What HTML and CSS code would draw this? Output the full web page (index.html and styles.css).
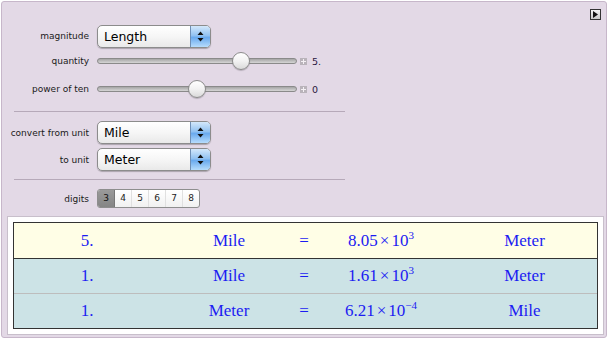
FILE: index.html
```html
<!DOCTYPE html>
<html lang="en">
<head>
    <meta charset="UTF-8">
    <title>Unit Converter</title>
    <link rel="stylesheet" href="styles.css">
</head>
<body>
    <div class="panel">
        <!-- toggle at top right -->
        <span class="toggle">
            <svg width="5" height="7" viewBox="0 0 5 7"><path d="M0 0 L5 3.5 L0 7 Z" fill="#111"/></svg>
        </span>

        <div class="controls">
            <div class="row row-popup first-row">
                <span class="label">magnitude</span>
                <div class="popup">
                    <span class="popup-text">Length</span>
                    <span class="popup-arrows">
                        <svg width="7" height="11" viewBox="0 0 7 11"><path d="M3.5 0.5 L6.5 4 L0.5 4 Z M0.5 7 L6.5 7 L3.5 10.5 Z" fill="#111"/></svg>
                    </span>
                </div>
            </div>

            <div class="row row-slider quantity-row">
                <span class="label">quantity</span>
                <div class="slider">
                    <div class="track"></div>
                    <div class="thumb" style="left: 135px"></div>
                </div>
                <span class="plus"></span>
                <span class="value">5.</span>
            </div>

            <div class="row row-slider power-row">
                <span class="label">power of ten</span>
                <div class="slider">
                    <div class="track"></div>
                    <div class="thumb" style="left: 91px"></div>
                </div>
                <span class="plus"></span>
                <span class="value">0</span>
            </div>

            <div class="sep"></div>

            <div class="row row-popup from-row">
                <span class="label">convert from unit</span>
                <div class="popup">
                    <span class="popup-text">Mile</span>
                    <span class="popup-arrows">
                        <svg width="7" height="11" viewBox="0 0 7 11"><path d="M3.5 0.5 L6.5 4 L0.5 4 Z M0.5 7 L6.5 7 L3.5 10.5 Z" fill="#111"/></svg>
                    </span>
                </div>
            </div>

            <div class="row row-popup to-row">
                <span class="label">to unit</span>
                <div class="popup">
                    <span class="popup-text">Meter</span>
                    <span class="popup-arrows">
                        <svg width="7" height="11" viewBox="0 0 7 11"><path d="M3.5 0.5 L6.5 4 L0.5 4 Z M0.5 7 L6.5 7 L3.5 10.5 Z" fill="#111"/></svg>
                    </span>
                </div>
            </div>

            <div class="sep sep-2"></div>

            <div class="row digits-row">
                <span class="label">digits</span>
                <div class="setter">
                    <span class="seg selected">3</span>
                    <span class="seg">4</span>
                    <span class="seg">5</span>
                    <span class="seg">6</span>
                    <span class="seg">7</span>
                    <span class="seg">8</span>
                </div>
            </div>
        </div>

        <!-- result table -->
        <div class="output">
            <div class="table">
                <div class="trow top">
                    <span>5.</span>
                    <span>Mile</span>
                    <span>=</span>
                    <span>8.05<span class="times">&times;</span>10<sup>3</sup></span>
                    <span>Meter</span>
                </div>
                <div class="trow">
                    <span>1.</span>
                    <span>Mile</span>
                    <span>=</span>
                    <span>1.61<span class="times">&times;</span>10<sup>3</sup></span>
                    <span>Meter</span>
                </div>
                <div class="trow last">
                    <span>1.</span>
                    <span>Meter</span>
                    <span>=</span>
                    <span>6.21<span class="times">&times;</span>10<sup>&minus;4</sup></span>
                    <span>Mile</span>
                </div>
            </div>
        </div>
    </div>
</body>
</html>
```

FILE: styles.css
```css
body {
    margin: 0;
    background: #ffffff;
    font-family: "DejaVu Sans", sans-serif;
}

/* outer frame */
.panel {
    position: relative;
    margin: 1px;
    width: 604px;
    height: 335px;
    background: #e3d9e6;
    border: 1px solid #c7b7ca;
    border-radius: 3px;
}

.toggle {
    position: absolute;
    top: 7px;
    right: 5px;
    width: 9px;
    height: 9px;
    border: 1px solid #333;
    background: linear-gradient(#f4f4f4, #c9c9c9);
    display: flex;
    align-items: center;
    justify-content: center;
}

/* controls */
.controls {
    display: flex;
    flex-direction: column;
}

.row {
    display: flex;
    align-items: center;
}

.label {
    width: 87px;
    margin-right: 8px;
    text-align: right;
    font-size: 9px;
    color: #1a1a1a;
}

.first-row {
    margin-top: 22px;
    height: 24px;
}

.quantity-row {
    margin-top: 3px;
    height: 20px;
}

.power-row {
    margin-top: 8px;
    height: 20px;
}

.from-row {
    margin-top: 9px;
    height: 23px;
}

.to-row {
    margin-top: 4px;
    height: 23px;
}

.digits-row {
    margin-top: 9px;
    height: 19px;
}

.sep {
    margin: 12px 0 0 12px;
    width: 331px;
    height: 1px;
    background: #b6a9b9;
}

.sep-2 {
    margin-top: 8px;
}

/* popup menu */
.popup {
    display: flex;
    width: 112px;
    height: 21px;
    border: 1px solid #8c8c8c;
    border-radius: 5px;
    background: linear-gradient(#ffffff, #f6f6f6 50%, #e9e9e9);
    box-shadow: 0 1px 1px rgba(0, 0, 0, 0.25);
    overflow: hidden;
}

.popup-text {
    flex: 1;
    padding-left: 6px;
    font-size: 12.5px;
    line-height: 21px;
    color: #000;
}

.popup-arrows {
    width: 19px;
    display: flex;
    align-items: center;
    justify-content: center;
    border-left: 1px solid #6f8fb5;
    background: linear-gradient(#d3e8fb, #92c2f1 45%, #6aaaee 55%, #b6dcfc);
}

/* sliders */
.slider {
    position: relative;
    width: 200px;
    height: 18px;
}

.track {
    position: absolute;
    top: 6px;
    left: 0;
    right: 0;
    height: 4px;
    border: 1px solid #8a8a8a;
    border-radius: 3px;
    background: linear-gradient(#a5a5a5, #d6d6d6);
}

.thumb {
    position: absolute;
    top: 0;
    width: 16px;
    height: 16px;
    border: 1px solid #8c8c8c;
    border-radius: 50%;
    background: linear-gradient(#ffffff, #f2f2f2 50%, #dadada);
    box-shadow: 0 1px 1px rgba(0, 0, 0, 0.2);
}

.plus {
    position: relative;
    width: 7px;
    height: 7px;
    margin-left: 3px;
    background: #b9b3ba;
}

.plus::before,
.plus::after {
    content: "";
    position: absolute;
    background: #f4f0f4;
}

.plus::before {
    left: 1px;
    top: 3px;
    width: 5px;
    height: 1px;
}

.plus::after {
    left: 3px;
    top: 1px;
    width: 1px;
    height: 5px;
}

.value {
    margin-left: 5px;
    font-size: 9.5px;
    color: #2a1640;
}

/* digits setter bar */
.setter {
    display: flex;
    height: 17px;
    border: 1px solid #8e8e8e;
    border-radius: 3px;
    background: linear-gradient(#ffffff, #f1f1f1);
    overflow: hidden;
}

.seg {
    width: 16px;
    text-align: center;
    font-size: 9px;
    line-height: 17px;
    color: #222;
    border-right: 1px solid #e0e0e0;
}

.seg:last-child {
    border-right: none;
}

.seg.selected {
    background: linear-gradient(#9a9a9a, #858585);
    color: #111;
    border-right: 1px solid #777;
}

/* output */
.output {
    margin: 8px 0 0 5px;
    width: 585px;
    padding: 5px;
    background: #ffffff;
    border: 1px solid #c8bfcb;
}

.table {
    border: 1px solid #333;
    font-family: "Liberation Serif", serif;
    font-size: 17px;
    color: #1c1cf2;
}

.trow {
    display: grid;
    grid-template-columns: 146px 138px 12px 142px 1fr;
    align-items: center;
    height: 34px;
    background: #cce3e6;
    border-top: 1px solid #bdbdbd;
}

.trow span {
    text-align: center;
}

.trow.top {
    height: 35px;
    background: #fffee6;
    border-top: none;
    border-bottom: 1px solid #333;
}

.trow.top + .trow {
    border-top: none;
}

.trow .times {
    margin: 0 2px;
}

sup {
    font-size: 11px;
    vertical-align: 7px;
    line-height: 0;
}
```
